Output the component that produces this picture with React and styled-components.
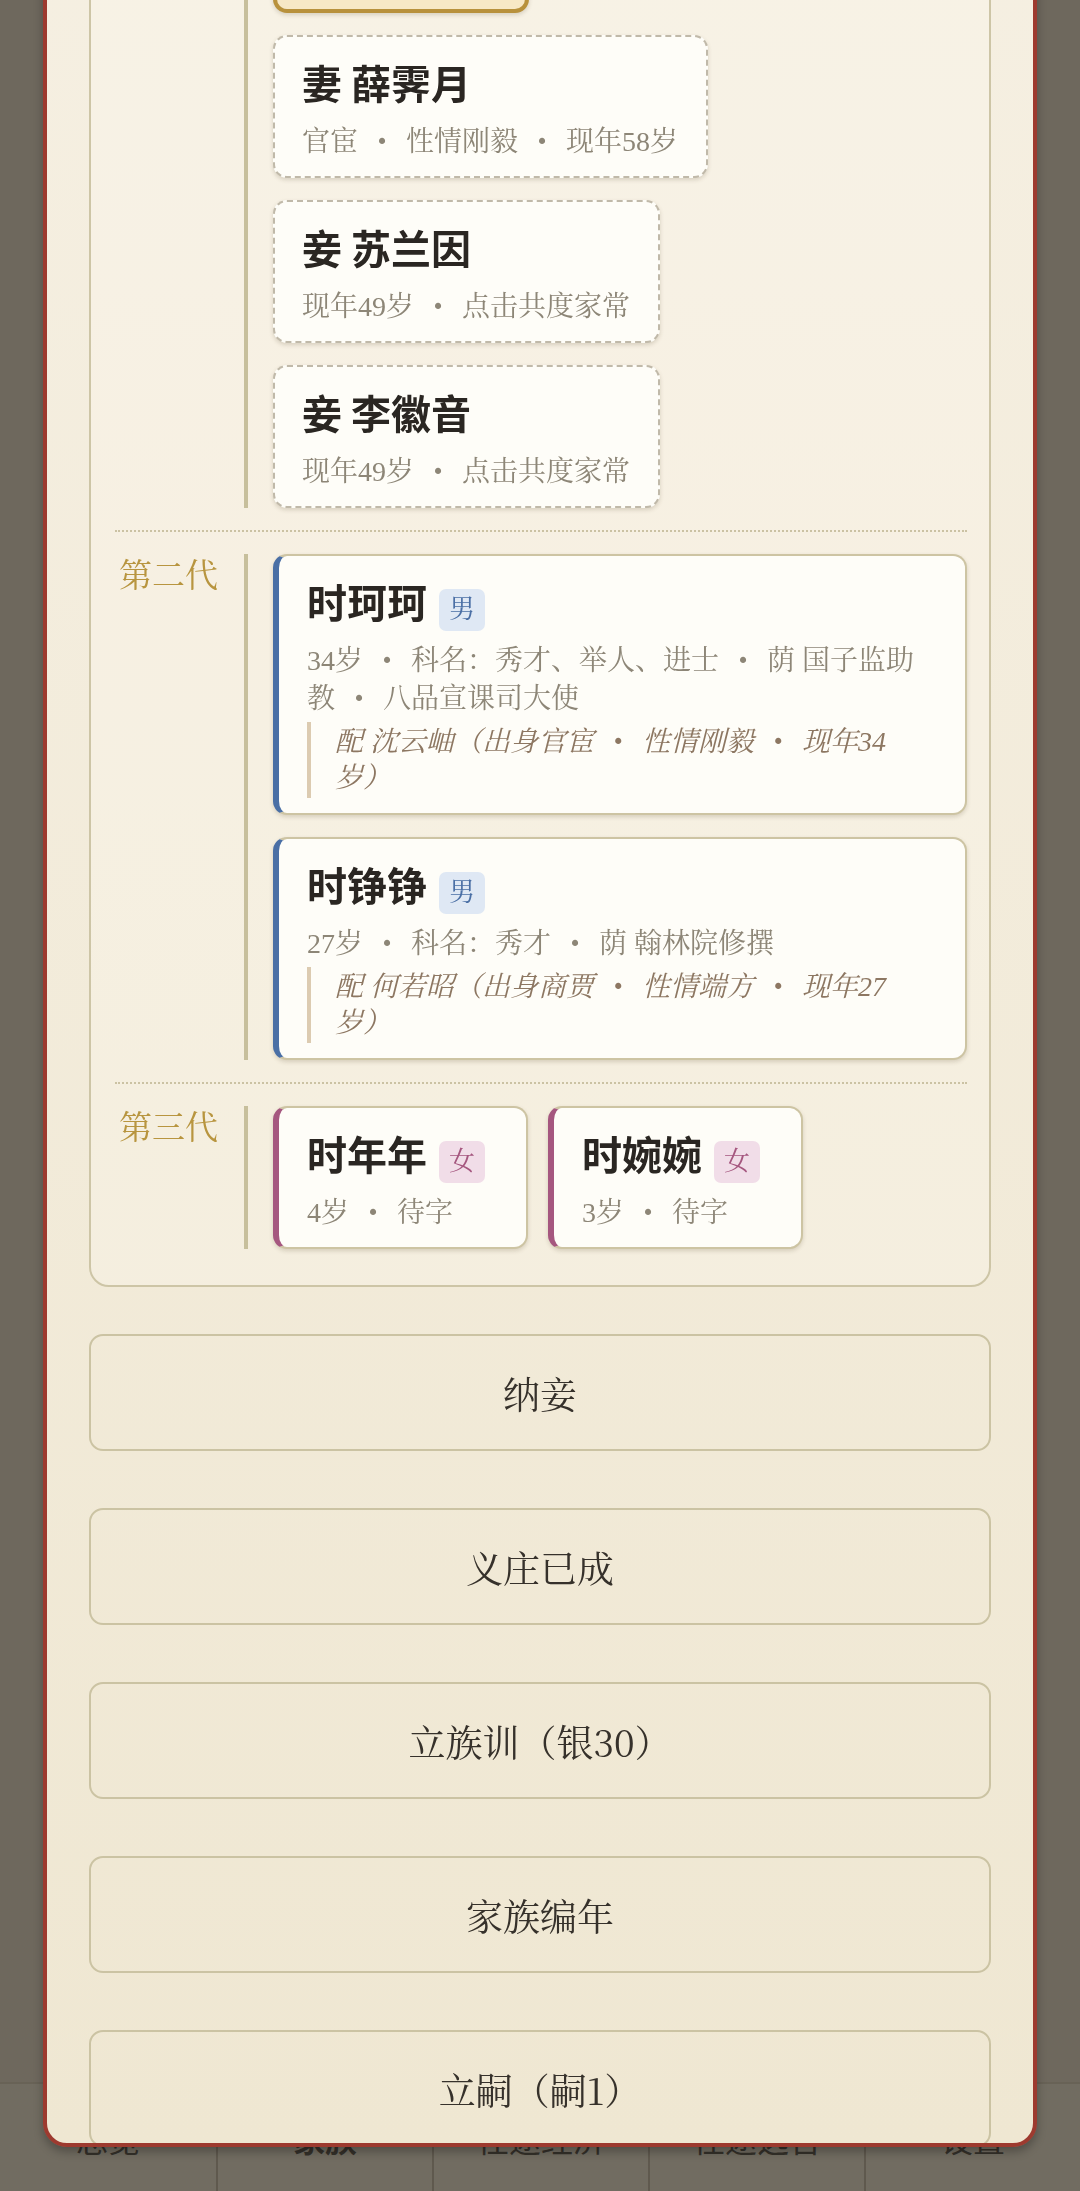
import React from 'react';
import styled, { createGlobalStyle } from 'styled-components';

const SANS = `"Noto Sans CJK SC", "Noto Sans", sans-serif`;
const SERIF = `"Liberation Serif", "Noto Serif CJK SC", "Noto Sans CJK SC", serif`;
const CJK_SERIF = `"Noto Serif CJK SC", "Liberation Serif", "Noto Sans CJK SC", serif`;

const GlobalStyle = createGlobalStyle`
  html, body { margin: 0; padding: 0; height: 100%; }
  body {
    background: #e6dcc6;
    font-family: ${SERIF};
    overflow: hidden;
  }
  *, *::before, *::after { box-sizing: border-box; }
`;

const Page = styled.div`
  min-height: 100vh;
  background: #e6dcc6;
`;

const NavBar = styled.nav`
  position: fixed;
  left: 0;
  right: 0;
  bottom: 0;
  height: 109px;
  display: grid;
  grid-template-columns: repeat(5, 1fr);
  background: #efe6d2;
  border-top: 2px solid #d6cab0;
`;

const NavItem = styled.div`
  display: flex;
  align-items: center;
  justify-content: center;
  font-family: ${SANS};
  font-size: 32px;
  font-weight: ${(p) => (p.$active ? 700 : 400)};
  color: #3b352d;
  & + & { border-left: 2px solid #b9ae98; }
`;

const Overlay = styled.div`
  position: fixed;
  inset: 0;
  background: rgba(50, 47, 40, 0.667);
`;

const Modal = styled.div`
  position: fixed;
  left: 43px;
  right: 43px;
  bottom: 44px;
  border: 4px solid #9d3a2f;
  border-radius: 24px;
  background: linear-gradient(180deg, #f6f0e3 0%, #efe7d2 100%);
  padding: 36px 42px 0;
  overflow: hidden;
  box-shadow: 0 5px 10px rgba(0, 0, 0, 0.28);
`;

const Title = styled.h2`
  margin: 0 0 28px;
  text-align: center;
  font-family: ${SANS};
  font-size: 40px;
  font-weight: 700;
  color: #7a2e24;
`;

const Panel = styled.section`
  border: 2px solid #cdc5a6;
  border-radius: 20px;
  padding: 0 22px 14px 24px;
  background: rgba(255, 252, 242, 0.25);
`;

const GenRow = styled.div`
  display: flex;
  align-items: flex-start;
  padding: 22px 0;
  & + & { border-top: 2px dotted #cbc2a3; }
`;

const GenLabel = styled.div`
  flex: 0 0 129px;
  padding-left: 4px;
  font-family: ${SERIF};
  font-size: 33px;
  line-height: 44px;
  color: #b8953f;
`;

const Branch = styled.div`
  flex: 1;
  min-width: 0;
  border-left: 4px solid #c7bf9c;
  padding-left: 25px;
  display: flex;
  flex-wrap: wrap;
  align-items: flex-start;
  gap: 22px 20px;
`;

const Card = styled.div`
  max-width: 100%;
  background: #fefdf8;
  border-radius: 14px;
  padding: 20px 28px 15px;
  box-shadow: 0 2px 4px rgba(90, 75, 45, 0.2);
`;

const SpouseCard = styled(Card)`
  border: 2px dashed #c0b9a9;
  padding-left: 27px;
`;

const ChildCard = styled(Card)`
  min-width: 255px;
  border: 2px solid #cdc4a3;
  border-left: 6px solid ${(p) => p.$accent};
`;

const HeirCard = styled(Card)`
  min-width: 256px;
  background: #f7e8c6;
  border: 4px solid #b8913c;
`;

const NameRow = styled.div`
  display: flex;
  align-items: baseline;
  gap: 12px;
  height: 50px;
`;

const Name = styled.span`
  font-family: ${SANS};
  font-size: 40px;
  line-height: 50px;
  font-weight: 700;
  color: #2a2622;
  white-space: nowrap;
`;

const Tag = styled.span`
  font-family: ${SERIF};
  font-size: 26px;
  line-height: 34px;
  padding: 4px 10px;
  border-radius: 7px;
  background: ${(p) => p.$bg};
  color: ${(p) => p.$fg};
  white-space: nowrap;
`;

const Sub = styled.div`
  margin-top: 16px;
  font-family: ${SERIF};
  font-size: 28px;
  line-height: 38px;
  color: #8d8677;
`;

const Dot = styled.span`
  display: inline-block;
  width: 48px;
  text-align: center;
  font-weight: 700;
  transform: scale(1.35);
`;

const SpouseLine = styled.div`
  margin-top: 4px;
  border-left: 4px solid #dccbb1;
  padding: 2px 0 2px 24px;
  font-family: ${SERIF};
  font-style: italic;
  font-size: 28px;
  line-height: 36px;
  color: #8d7762;
`;

const ButtonList = styled.div`
  display: flex;
  flex-direction: column;
  gap: 57px;
  margin-top: 47px;
  margin-bottom: -4px;
`;

const ActionButton = styled.button`
  height: 117px;
  width: 100%;
  border: 2px solid #cbc3a3;
  border-radius: 14px;
  background: transparent;
  font-family: ${CJK_SERIF};
  font-size: 37px;
  color: #36312b;
  cursor: pointer;
`;

const GENDER = {
  男: { accent: '#4a6fa5', bg: '#dfe8f4', fg: '#4a6fa5' },
  女: { accent: '#a5577f', bg: '#f1dde8', fg: '#a5577f' },
};

function Parts({ items }) {
  return items.map((t, i) => (
    <React.Fragment key={i}>
      {i > 0 && <Dot>·</Dot>}
      {t}
    </React.Fragment>
  ));
}

function Spouse({ name, info }) {
  return (
    <SpouseCard>
      <NameRow>
        <Name>{name}</Name>
      </NameRow>
      <Sub>
        <Parts items={info} />
      </Sub>
    </SpouseCard>
  );
}

function Child({ name, gender, info, spouse }) {
  const g = GENDER[gender];
  return (
    <ChildCard $accent={g.accent}>
      <NameRow>
        <Name>{name}</Name>
        <Tag $bg={g.bg} $fg={g.fg}>{gender}</Tag>
      </NameRow>
      <Sub>
        <Parts items={info} />
      </Sub>
      {spouse && (
        <SpouseLine>
          配 {spouse.name}（<Parts items={spouse.info} />）
        </SpouseLine>
      )}
    </ChildCard>
  );
}

const gen2 = [
  {
    name: '时珂珂',
    gender: '男',
    info: ['34岁', '科名：秀才、举人、进士', '荫 国子监助教', '八品宣课司大使'],
    spouse: { name: '沈云岫', info: ['出身官宦', '性情刚毅', '现年34岁'] },
  },
  {
    name: '时铮铮',
    gender: '男',
    info: ['27岁', '科名：秀才', '荫 翰林院修撰'],
    spouse: { name: '何若昭', info: ['出身商贾', '性情端方', '现年27岁'] },
  },
];

const gen3 = [
  { name: '时年年', gender: '女', info: ['4岁', '待字'] },
  { name: '时婉婉', gender: '女', info: ['3岁', '待字'] },
];

const actions = ['纳妾', '义庄已成', '立族训（银30）', '家族编年', '立嗣（嗣1）'];
const tabs = ['总览', '家族', '仕途经济', '仕途选官', '设置'];

export default function App() {
  return (
    <>
      <GlobalStyle />
      <Page />
      <NavBar>
        {tabs.map((t, i) => (
          <NavItem key={t} $active={i === 1}>{t}</NavItem>
        ))}
      </NavBar>
      <Overlay />
      <Modal>
        <Title>族谱</Title>
        <Panel>
          <GenRow>
            <GenLabel>第一代</GenLabel>
            <Branch>
              <HeirCard>
                <NameRow>
                  <Name>时砚之</Name>
                </NameRow>
                <Sub>
                  <Parts items={['家主', '58岁']} />
                </Sub>
              </HeirCard>
              <Spouse name="妻 薛霁月" info={['官宦', '性情刚毅', '现年58岁']} />
              <Spouse name="妾 苏兰因" info={['现年49岁', '点击共度家常']} />
              <Spouse name="妾 李徽音" info={['现年49岁', '点击共度家常']} />
            </Branch>
          </GenRow>
          <GenRow>
            <GenLabel>第二代</GenLabel>
            <Branch>
              {gen2.map((c) => (
                <Child key={c.name} {...c} />
              ))}
            </Branch>
          </GenRow>
          <GenRow>
            <GenLabel>第三代</GenLabel>
            <Branch>
              {gen3.map((c) => (
                <Child key={c.name} {...c} />
              ))}
            </Branch>
          </GenRow>
        </Panel>
        <ButtonList>
          {actions.map((a) => (
            <ActionButton key={a}>{a}</ActionButton>
          ))}
        </ButtonList>
      </Modal>
    </>
  );
}
